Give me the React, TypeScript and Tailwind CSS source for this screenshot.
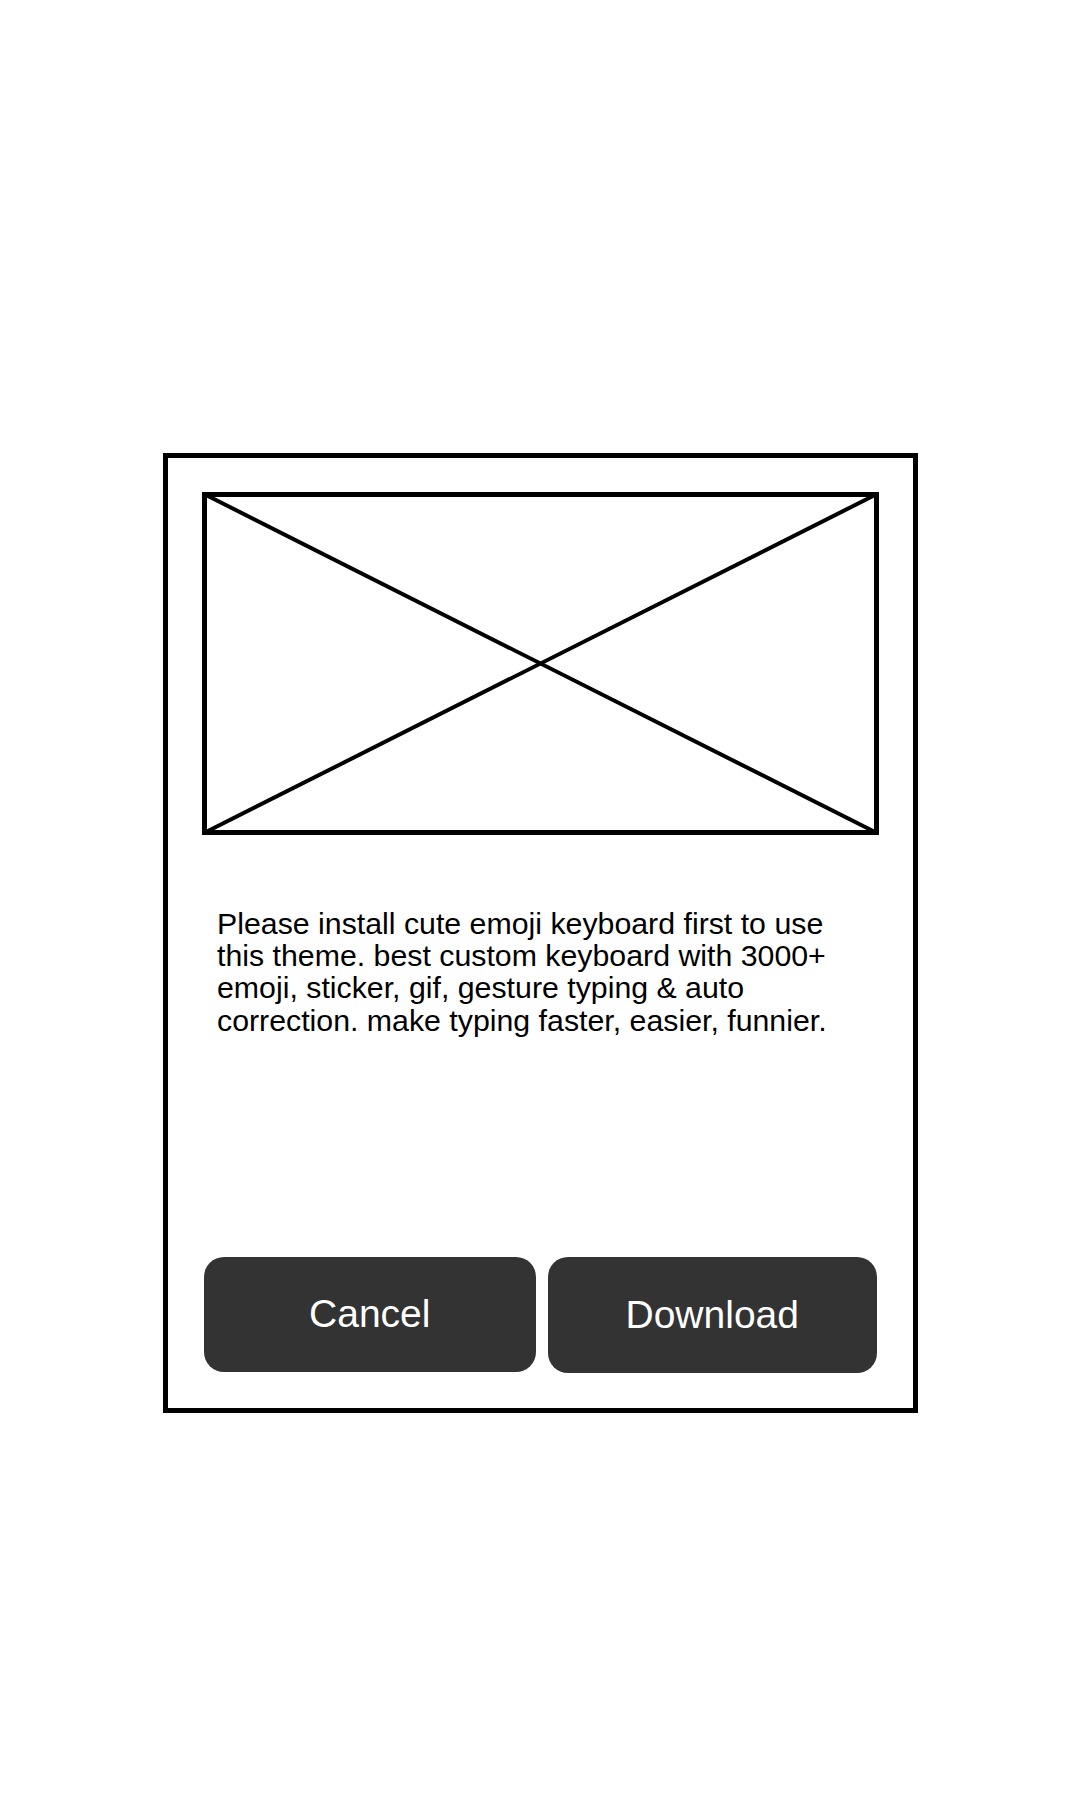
export default function App() {
  return (
    <div
      className="min-h-[1800px] w-[1080px] bg-white pl-[163px] pt-[453px]"
      style={{ fontFamily: '"Liberation Sans", Arial, sans-serif' }}
    >
      {/* ── Dialog box ───────────────────────────────────── */}
      <div className="flex h-[960px] w-[755px] flex-col border-[5px] border-black px-[34px] pb-[35px] pt-[34px]">
        {/* Image placeholder */}
        <svg width="677" height="343" viewBox="0 0 677 343" className="block shrink-0">
          <rect x="2.5" y="2.5" width="672" height="338" fill="none" stroke="#000" strokeWidth="5" />
          <line x1="2" y1="2" x2="675" y2="341" stroke="#000" strokeWidth="4" />
          <line x1="675" y1="2" x2="2" y2="341" stroke="#000" strokeWidth="4" />
        </svg>

        <p className="ml-[15px] mt-[73px] whitespace-nowrap text-[30.3px] leading-[32.2px] text-black">
          Please install cute emoji keyboard first to use
          <br />
          this theme. best custom keyboard with 3000+
          <br />
          emoji, sticker, gif, gesture typing &amp; auto
          <br />
          correction. make typing faster, easier, funnier.
        </p>

        {/* Buttons */}
        <div className="mt-auto flex gap-[12px] px-[2px]">
          <button
            type="button"
            className="flex h-[115px] w-[332px] items-center justify-center rounded-[20px] bg-[#333333] text-[39px] text-white"
          >
            Cancel
          </button>
          <button
            type="button"
            className="flex h-[116px] w-[330px] items-center justify-center rounded-[20px] bg-[#333333] text-[39px] text-white"
          >
            Download
          </button>
        </div>
      </div>
    </div>
  );
}
